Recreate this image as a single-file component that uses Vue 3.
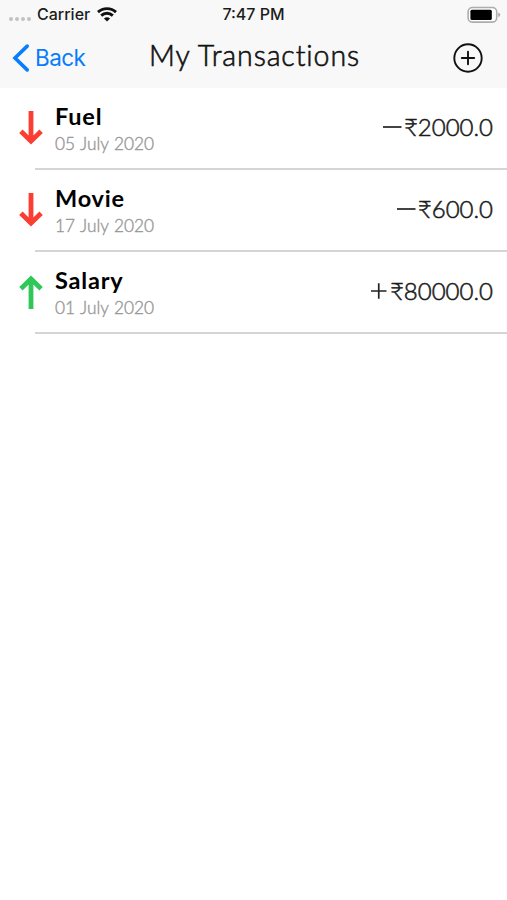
<script setup>
const transactions = [
  { id: 1, name: 'Fuel', date: '05 July 2020', sign: '−', amount: '2000.0', income: false },
  { id: 2, name: 'Movie', date: '17 July 2020', sign: '−', amount: '600.0', income: false },
  { id: 3, name: 'Salary', date: '01 July 2020', sign: '+', amount: '80000.0', income: true },
]
</script>

<template>
  <main class="screen">
    <header class="top">
      <div class="status">
        <div class="carrier">
          <span class="dots"><i v-for="n in 4" :key="n"></i></span>
          <span class="carrier-name">Carrier</span>
          <svg class="wifi" width="20" height="15" viewBox="0 0 20 15" fill="none" stroke="#111" stroke-width="2.9">
            <path d="M1 5.1C6 .4 14 .4 19 5.1" />
            <path d="M4.2 8.6C7.5 5.4 12.5 5.4 15.8 8.6" />
            <path d="M10 14.6 6.9 11.5Q10 8.9 13.1 11.5Z" fill="#111" stroke="none" />
          </svg>
        </div>
        <span class="time">7:47 PM</span>
        <svg class="battery" width="34" height="18" viewBox="0 0 34 18">
          <rect x="1.1" y="1.5" width="28.6" height="14.6" rx="4.3" fill="#fff" stroke="#adadad" stroke-width="1.6" />
          <rect x="3.4" y="3.8" width="21.4" height="10.2" rx="1.5" fill="#000" />
          <path d="M31.2 6.5Q33.3 7.2 33.3 8.8T31.2 11.1Z" fill="#adadad" />
        </svg>
      </div>
      <nav class="nav">
        <button class="back">
          <svg width="18" height="30" viewBox="0 0 18 30" fill="none" stroke="#087dfd" stroke-width="3.6" stroke-linecap="round">
            <path d="M15.2 3.1 3 15 15.2 26.9" stroke-linejoin="miter" />
          </svg>
          <span>Back</span>
        </button>
        <h1>My Transactions</h1>
        <button class="add" aria-label="Add">
          <svg width="32" height="32" viewBox="0 0 32 32" fill="none" stroke="#111" stroke-width="1.9" stroke-linecap="round">
            <circle cx="16" cy="16" r="13.7" />
            <path d="M16 9.8V22.2M9.8 16H22.2" />
          </svg>
        </button>
      </nav>
    </header>
    <ul class="list">
      <li v-for="t in transactions" :key="t.id" class="row">
        <svg class="arrow" :class="{ income: t.income }" width="26" height="36" viewBox="0 0 26 36" fill="none" stroke-width="4.8">
          <path d="M13 1V31M2.9 21.2 13 31.2 23.1 21.2" />
        </svg>
        <div class="info">
          <span class="name">{{ t.name }}</span>
          <span class="date">{{ t.date }}</span>
        </div>
        <div class="amount">
          <svg class="sign" :class="{ plus: t.income }" width="20" height="18" viewBox="0 0 20 18" stroke="#222" stroke-width="1.7">
            <title>{{ t.sign }}</title>
            <path :d="t.income ? 'M2 9H17.5M9.75 1.3V16.7' : 'M1 9H19.5'" />
          </svg>
          <span class="digits">₹{{ t.amount }}</span>
        </div>
      </li>
    </ul>
  </main>
</template>

<style>
body {
  background: #fff;
}
</style>

<style scoped>
.screen {
  width: 507px;
  height: 900px;
  background: #fff;
  font-family: Lato, "Noto Sans", sans-serif;
  font-variant-ligatures: none;
  overflow: hidden;
}
.top {
  height: 88px;
  background: #f8f8f8;
}
.status {
  height: 28px;
  display: grid;
  grid-template-columns: 1fr auto 1fr;
  align-items: center;
  font: 500 16px/28px Inter, sans-serif;
  color: #1c1c1c;
}
.carrier {
  display: flex;
  align-items: center;
  padding-left: 9px;
}
.dots {
  display: flex;
  gap: 2px;
  width: 28px;
  padding-top: 9px;
}
.dots i {
  width: 4px;
  height: 4px;
  border-radius: 50%;
  background: #c2c2c2;
}
.carrier-name {
  width: 60px;
}
.battery {
  justify-self: end;
  margin: 1px 6px 0 0;
}
.nav {
  height: 60px;
  display: grid;
  grid-template-columns: 1fr auto 1fr;
  align-items: center;
}
button {
  border: 0;
  padding: 0;
  background: none;
}
.back {
  display: flex;
  align-items: center;
  gap: 5px;
  padding-left: 12px;
  color: #087dfd;
  font: 400 22.5px/30px Inter, sans-serif;
  letter-spacing: -0.55px;
}
h1 {
  margin: 0;
  padding: 0 0 6px 2px;
  font-size: 28.5px;
  line-height: 34px;
  font-weight: 300;
  letter-spacing: 0.9px;
  -webkit-text-stroke: 0.6px #111;
  color: #111;
}
.add {
  justify-self: end;
  display: flex;
  margin: 0 23px 1px 0;
}
.list {
  list-style: none;
  margin: 0;
  padding: 0;
}
.row {
  height: 82px;
  box-sizing: border-box;
  display: flex;
  align-items: center;
  padding: 0 14px 0 18px;
  background: linear-gradient(#d5d5d5, #d5d5d5) 35px 100% / 100% 2px no-repeat;
}
.arrow {
  stroke: #fc3d32;
  margin-bottom: 2px;
}
.arrow.income {
  stroke: #30c759;
  transform: rotate(180deg);
}
.info {
  flex: 1;
  display: flex;
  flex-direction: column;
  padding: 0 0 1px 11px;
}
.name {
  font-size: 23.5px;
  line-height: 29px;
  font-weight: 700;
  letter-spacing: 0.8px;
  color: #000;
}
.date {
  font-size: 17.3px;
  line-height: 25px;
  font-weight: 300;
  word-spacing: 0.8px;
  -webkit-text-stroke: 0.4px #999;
  color: #999;
}
.amount {
  display: flex;
  align-items: center;
  padding-bottom: 4px;
  font-size: 24px;
  line-height: 30px;
  font-weight: 300;
  -webkit-text-stroke: 0.55px #1c1c1c;
  color: #1c1c1c;
}
.sign {
  margin-right: 2px;
}
.sign.plus {
  margin-right: 1px;
}
</style>
